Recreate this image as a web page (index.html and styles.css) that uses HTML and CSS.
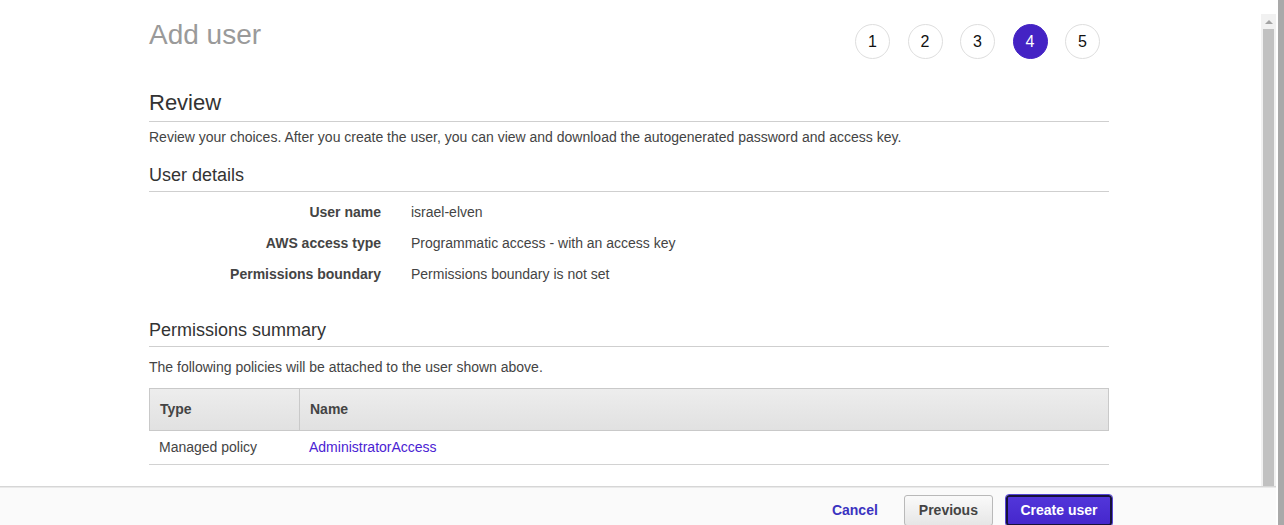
FILE: index.html
```html
<!DOCTYPE html>
<html lang="en">
<head>
<meta charset="utf-8">
<title>Add user</title>
<link rel="stylesheet" href="styles.css">
</head>
<body>
<div class="frame">
  <div class="scrollarea">
    <div class="content-wrap">
      <div class="page">
        <div class="page-head">
          <h1 class="title">Add user</h1>
          <ol class="steps">
            <li class="step">1</li>
            <li class="step">2</li>
            <li class="step">3</li>
            <li class="step active">4</li>
            <li class="step">5</li>
          </ol>
        </div>

        <h2 class="h-review">Review</h2>
        <p class="desc">Review your choices. After you create the user, you can view and download the autogenerated password and access key.</p>

        <h3 class="h-section">User details</h3>
        <dl class="details">
          <dt>User name</dt><dd>israel-elven</dd>
          <dt>AWS access type</dt><dd>Programmatic access - with an access key</dd>
          <dt>Permissions boundary</dt><dd>Permissions boundary is not set</dd>
        </dl>

        <h3 class="h-section h-perm">Permissions summary</h3>
        <p class="desc desc-perm">The following policies will be attached to the user shown above.</p>

        <div class="tbl">
          <div class="tbl-head">
            <div class="th">Type</div>
            <div class="th th-name">Name</div>
          </div>
          <div class="tbl-row">
            <div class="td">Managed policy</div>
            <div class="td"><a class="link" href="#">AdministratorAccess</a></div>
          </div>
        </div>
      </div>
    </div>
    <div class="vscroll">
      <div class="vs-arrow"><span class="tri"></span></div>
      <div class="vs-thumb"></div>
    </div>
  </div>
  <div class="footer">
    <span class="btn-cancel">Cancel</span>
    <span class="btn btn-prev">Previous</span>
    <span class="btn btn-create">Create user</span>
  </div>
</div>
<div class="edge-gap"></div>
<div class="edge"></div>
</body>
</html>
```
FILE: styles.css
```css
* { box-sizing: border-box; }

html, body {
  margin: 0;
  padding: 0;
  height: 525px;
  overflow: hidden;
  background: #fff;
}

body {
  display: flex;
  font-family: "Liberation Sans", Arial, sans-serif;
  font-size: 14px;
  color: #444;
}

.frame {
  width: 1276px;
  height: 525px;
  display: flex;
  flex-direction: column;
}

.scrollarea {
  height: 486px;
  flex: none;
  display: flex;
  overflow: hidden;
}

.content-wrap {
  flex: 1;
  padding-left: 149px;
}

.page {
  width: 960px;
}

.page-head {
  display: flex;
  justify-content: space-between;
  align-items: flex-start;
}

.title {
  margin: 19px 0 0;
  font-size: 28px;
  line-height: 32px;
  font-weight: normal;
  color: #9a9a9a;
}

.steps {
  list-style: none;
  margin: 24px 9px 0 0;
  padding: 0;
  display: flex;
  gap: 17.5px;
}

.step {
  width: 35px;
  height: 35px;
  border: 1px solid #dedede;
  border-radius: 50%;
  display: flex;
  align-items: center;
  justify-content: center;
  font-size: 16px;
  color: #111;
}

.step.active {
  background: #4423c4;
  border-color: #4423c4;
  color: #fff;
}

.h-review {
  margin: 31px 0 0;
  font-size: 22px;
  line-height: 26px;
  font-weight: normal;
  color: #333;
  padding-bottom: 5px;
  border-bottom: 1px solid #cfcfcf;
}

.desc {
  margin: 5px 0 0;
  line-height: 20px;
  color: #444;
}

.h-section {
  margin: 17px 0 0;
  font-size: 18px;
  line-height: 22px;
  font-weight: normal;
  color: #333;
  padding-bottom: 5px;
  border-bottom: 1px solid #cfcfcf;
}

.details {
  margin: 5px 0 0;
  display: grid;
  grid-template-columns: 232px 1fr;
  column-gap: 30px;
}

.details dt,
.details dd {
  margin: 0;
  padding: 5px 0;
  line-height: 21px;
}

.details dt {
  text-align: right;
  font-weight: bold;
  color: #444;
}

.h-perm {
  margin-top: 29px;
}

.desc-perm {
  margin-top: 10px;
}

.tbl {
  margin-top: 11px;
}

.tbl-head {
  display: grid;
  grid-template-columns: 149px 1fr;
  height: 43px;
  border: 1px solid #c9c9c9;
  background: linear-gradient(#ededed, #e1e1e1);
}

.th {
  display: flex;
  align-items: center;
  padding: 0 0 2px 10px;
  font-weight: bold;
  color: #444;
}

.th-name {
  border-left: 1px solid #c9c9c9;
}

.tbl-row {
  display: grid;
  grid-template-columns: 150px 1fr;
  height: 34px;
  border-bottom: 1px solid #d2d2d2;
}

.td {
  display: flex;
  align-items: center;
  padding: 0 0 2px 10px;
  color: #444;
}

.link {
  color: #4a22d3;
  text-decoration: none;
}

.vscroll {
  width: 15px;
  margin-top: 14px;
  background: #f1f1f1;
  display: flex;
  flex-direction: column;
}

.vs-arrow {
  height: 15px;
  display: flex;
  align-items: center;
  justify-content: center;
}

.tri {
  width: 0;
  height: 0;
  border-left: 4px solid transparent;
  border-right: 4px solid transparent;
  border-bottom: 4px solid #a3a3a3;
}

.vs-thumb {
  flex: 1;
  margin: 0 2px;
  background: #c1c1c1;
}

.footer {
  flex: 1;
  background: #fafafa;
  border-top: 1px solid #d6d6d6;
  box-shadow: inset 0 1px 0 #e9e9e9;
  display: flex;
  justify-content: flex-end;
  align-items: flex-start;
  padding: 8px 164px 0 0;
}

.btn-cancel {
  height: 31px;
  line-height: 31px;
  font-weight: bold;
  color: #3a33c0;
  margin-right: 26px;
}

.btn {
  height: 31px;
  line-height: 29px;
  font-weight: bold;
  border-radius: 3px;
}

.btn-prev {
  padding: 0 14px;
  border: 1px solid #b9b9b9;
  background: linear-gradient(#fafafa, #e6e6e6);
  color: #444;
  margin-right: 13px;
}

.btn-create {
  padding: 0 12.5px;
  border: 2px solid #16123a;
  outline: 1px solid #5545d6;
  line-height: 27px;
  background: linear-gradient(#5236da, #4527cc);
  color: #fff;
}

.edge-gap {
  width: 2px;
  background: #fff;
}

.edge {
  width: 6px;
  background: #a9a9a9;
}
```
